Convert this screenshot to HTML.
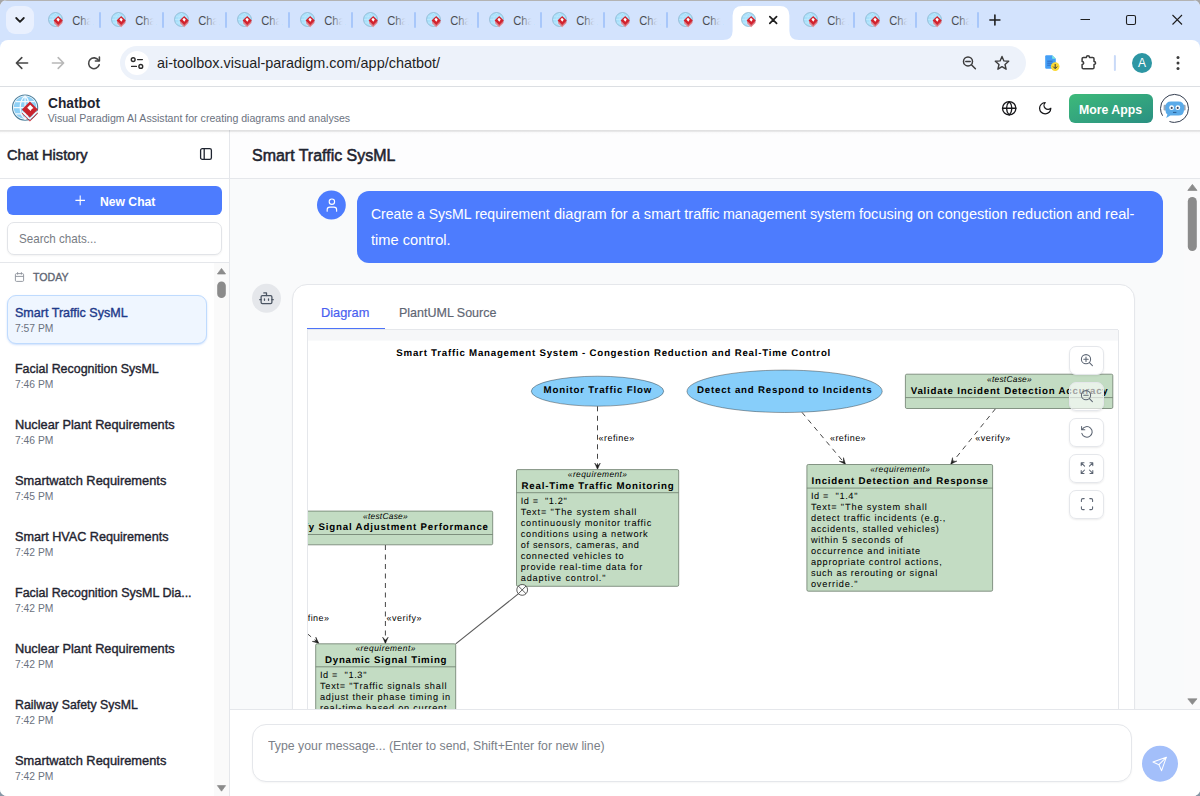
<!DOCTYPE html>
<html><head><meta charset="utf-8"><title>Chatbot</title>
<style>
*{box-sizing:border-box;margin:0;padding:0}
html,body{width:1200px;height:796px;overflow:hidden;background:linear-gradient(#a6a6a6 0,#a6a6a6 50%,#8797a6 50%,#8797a6 100%);font-family:"Liberation Sans",sans-serif;color:#1f2430}
.abs{position:absolute}

#tabbar{position:absolute;left:0;top:0;width:1200px;height:52px;background:#d3e3fd}
#toolbar{position:absolute;left:0;top:40px;width:1200px;height:46px;background:#fff;border-radius:8px 8px 0 0}
#tbline{position:absolute;left:0;top:86px;width:1200px;height:1px;background:#dcdfe3}
#omni{position:absolute;left:120px;top:46px;width:906px;height:34px;border-radius:17px;background:#edf2fa}
.tt{font-family:"Liberation Sans",sans-serif}

.dg text{font-family:"Liberation Sans",sans-serif;fill:#000}
.dg text{text-rendering:geometricPrecision}.dg .h{font-size:9.7px;font-weight:bold}.dg .b{font-size:9.2px;stroke:#000;stroke-width:0.04px}.dg .l{font-size:9px}.dg .s{font-size:8.4px;font-style:italic}
.tx{position:absolute;white-space:pre;line-height:1;transform-origin:0 50%}
#apphead{position:absolute;left:0;top:87px;width:1200px;height:43px;background:#fff}
#hshadow{position:absolute;left:0;top:130px;width:1200px;height:4px;background:linear-gradient(rgba(0,0,0,.12),rgba(0,0,0,.09) 35%,rgba(0,0,0,.02) 60%,rgba(0,0,0,0))}
#side{position:absolute;left:0;top:130px;width:230px;height:666px;background:#fff;border-right:1px solid #e5e7eb}
#main{position:absolute;left:230px;top:130px;width:970px;height:666px;background:#f9fafb}
#newchat{left:7px;top:186px;width:215px;height:29px;border-radius:6px;background:#4d7cfe}
#search{left:7px;top:222px;width:215px;height:33px;border:1px solid #e2e4e8;border-radius:7px;background:#fff;box-shadow:0 1px 2px rgba(0,0,0,.05)}
#selbox{left:7px;top:295px;width:200px;height:49px;border-radius:9px;background:#eff6ff;border:1px solid #bfdbfe;box-shadow:0 1px 2px rgba(59,130,246,.25)}
#mhead{left:230px;top:130px;width:970px;height:49px;background:#fdfdfe;border-bottom:1px solid #e5e7eb}
#ububble{left:357px;top:191px;width:806px;height:72px;border-radius:12px;background:#4d7cfe}
#botcard{left:292.4px;top:284px;width:842.6px;height:450px;border-radius:15px;background:#fff;border:1px solid #e5e7eb;box-shadow:0 1px 2px rgba(0,0,0,.04)}
#panel{left:307px;top:330px;width:812px;height:400px;border:1px solid #e5e7eb;border-top:none;background:#fff;overflow:hidden}
#inputbar{left:230px;top:709px;width:970px;height:87px;background:#fff;border-top:1px solid #e5e7eb}
#inputbox{left:252px;top:724px;width:880px;height:58px;border-radius:14px;border:1px solid #e5e7eb;background:#fff;box-shadow:0 1px 2px rgba(0,0,0,.04)}
.zb{position:absolute;left:761.2px;width:34.7px;height:28.7px;border:1px solid #e5e7eb;border-radius:7px;box-shadow:0 1px 2px rgba(0,0,0,.08)}
.zb svg{position:absolute;left:-0.7px;top:-0.6px}

#win{position:absolute;left:0;top:0;width:1200px;height:796px;border-radius:7px;overflow:hidden;background:#fff}
#topline{position:absolute;left:0;top:0;width:1200px;height:1px;background:#b3b3b3}
</style></head><body>
<div id="win">
<div id="tabbar"></div><div id="toolbar"></div><div id="tbline"></div><div id="omni"></div>
<svg width="1200" height="90" class="abs" style="left:0;top:0">
<defs><linearGradient id="fd" x1="0" x2="1"><stop offset="0" stop-color="#d3e3fd" stop-opacity="0"/><stop offset="0.25" stop-color="#d3e3fd" stop-opacity="0.3"/><stop offset="0.7" stop-color="#d3e3fd" stop-opacity="0.92"/><stop offset="0.85" stop-color="#d3e3fd" stop-opacity="1"/></linearGradient></defs>
<rect x="6" y="6" width="28" height="28" rx="9" fill="#e9f0fe"/>
<path d="M16.2 18 L20 21.8 L23.8 18" stroke="#1f1f1f" stroke-width="1.8" fill="none" stroke-linecap="round" stroke-linejoin="round"/>
<g transform="translate(55.5,19.5) scale(0.553) translate(-25.1,-107.6)"><circle cx="25.1" cy="107.6" r="12.6" fill="#a9e0fb" stroke="#86b1c9" stroke-width="1.3"/><path d="M25.1 96 C18.6 101 18.6 114.2 25.1 119.2 M25.1 96 C30.6 101 30.6 114.2 25.1 119.2 M13.6 107.6 H36.6 M15.4 101.6 H34.8 M15.4 113.8 H34.8" stroke="#c6ebfd" stroke-width="1.2" fill="none"/><path d="M29.9 101.6 L37.9 109.5 L29.9 117.4 L21.9 109.5 Z" fill="#d3222d"/><path d="M22.4 112.4 L29.9 119.8 L37.6 112.2 L37.6 114 L29.9 121.6 L22.4 114.2 Z" fill="#f08a8c"/><path d="M22.4 110.6 L29.9 118 L37.6 110.4 L37.6 112 L29.9 119.6 L22.4 112.2 Z" fill="#e9585f"/><path d="M29.9 101.6 L37.9 109.5 L29.9 117.4 L21.9 109.5 Z" fill="#d3222d"/><path d="M29.6 104.4 L32.8 107.6 L30.2 111.6 L26.8 107.4 Z" fill="#fff"/></g><text x="72.2" y="24.8" font-size="12.2" fill="#4a4d52" class="tt" textLength="20.6" lengthAdjust="spacingAndGlyphs">Cha</text><rect x="79" y="10" width="14" height="20" fill="url(#fd)"/>
<g transform="translate(118.5,19.5) scale(0.553) translate(-25.1,-107.6)"><circle cx="25.1" cy="107.6" r="12.6" fill="#a9e0fb" stroke="#86b1c9" stroke-width="1.3"/><path d="M25.1 96 C18.6 101 18.6 114.2 25.1 119.2 M25.1 96 C30.6 101 30.6 114.2 25.1 119.2 M13.6 107.6 H36.6 M15.4 101.6 H34.8 M15.4 113.8 H34.8" stroke="#c6ebfd" stroke-width="1.2" fill="none"/><path d="M29.9 101.6 L37.9 109.5 L29.9 117.4 L21.9 109.5 Z" fill="#d3222d"/><path d="M22.4 112.4 L29.9 119.8 L37.6 112.2 L37.6 114 L29.9 121.6 L22.4 114.2 Z" fill="#f08a8c"/><path d="M22.4 110.6 L29.9 118 L37.6 110.4 L37.6 112 L29.9 119.6 L22.4 112.2 Z" fill="#e9585f"/><path d="M29.9 101.6 L37.9 109.5 L29.9 117.4 L21.9 109.5 Z" fill="#d3222d"/><path d="M29.6 104.4 L32.8 107.6 L30.2 111.6 L26.8 107.4 Z" fill="#fff"/></g><text x="135.2" y="24.8" font-size="12.2" fill="#4a4d52" class="tt" textLength="20.6" lengthAdjust="spacingAndGlyphs">Cha</text><rect x="142" y="10" width="14" height="20" fill="url(#fd)"/>
<g transform="translate(181.5,19.5) scale(0.553) translate(-25.1,-107.6)"><circle cx="25.1" cy="107.6" r="12.6" fill="#a9e0fb" stroke="#86b1c9" stroke-width="1.3"/><path d="M25.1 96 C18.6 101 18.6 114.2 25.1 119.2 M25.1 96 C30.6 101 30.6 114.2 25.1 119.2 M13.6 107.6 H36.6 M15.4 101.6 H34.8 M15.4 113.8 H34.8" stroke="#c6ebfd" stroke-width="1.2" fill="none"/><path d="M29.9 101.6 L37.9 109.5 L29.9 117.4 L21.9 109.5 Z" fill="#d3222d"/><path d="M22.4 112.4 L29.9 119.8 L37.6 112.2 L37.6 114 L29.9 121.6 L22.4 114.2 Z" fill="#f08a8c"/><path d="M22.4 110.6 L29.9 118 L37.6 110.4 L37.6 112 L29.9 119.6 L22.4 112.2 Z" fill="#e9585f"/><path d="M29.9 101.6 L37.9 109.5 L29.9 117.4 L21.9 109.5 Z" fill="#d3222d"/><path d="M29.6 104.4 L32.8 107.6 L30.2 111.6 L26.8 107.4 Z" fill="#fff"/></g><text x="198.2" y="24.8" font-size="12.2" fill="#4a4d52" class="tt" textLength="20.6" lengthAdjust="spacingAndGlyphs">Cha</text><rect x="205" y="10" width="14" height="20" fill="url(#fd)"/>
<g transform="translate(244.5,19.5) scale(0.553) translate(-25.1,-107.6)"><circle cx="25.1" cy="107.6" r="12.6" fill="#a9e0fb" stroke="#86b1c9" stroke-width="1.3"/><path d="M25.1 96 C18.6 101 18.6 114.2 25.1 119.2 M25.1 96 C30.6 101 30.6 114.2 25.1 119.2 M13.6 107.6 H36.6 M15.4 101.6 H34.8 M15.4 113.8 H34.8" stroke="#c6ebfd" stroke-width="1.2" fill="none"/><path d="M29.9 101.6 L37.9 109.5 L29.9 117.4 L21.9 109.5 Z" fill="#d3222d"/><path d="M22.4 112.4 L29.9 119.8 L37.6 112.2 L37.6 114 L29.9 121.6 L22.4 114.2 Z" fill="#f08a8c"/><path d="M22.4 110.6 L29.9 118 L37.6 110.4 L37.6 112 L29.9 119.6 L22.4 112.2 Z" fill="#e9585f"/><path d="M29.9 101.6 L37.9 109.5 L29.9 117.4 L21.9 109.5 Z" fill="#d3222d"/><path d="M29.6 104.4 L32.8 107.6 L30.2 111.6 L26.8 107.4 Z" fill="#fff"/></g><text x="261.2" y="24.8" font-size="12.2" fill="#4a4d52" class="tt" textLength="20.6" lengthAdjust="spacingAndGlyphs">Cha</text><rect x="268" y="10" width="14" height="20" fill="url(#fd)"/>
<g transform="translate(307.5,19.5) scale(0.553) translate(-25.1,-107.6)"><circle cx="25.1" cy="107.6" r="12.6" fill="#a9e0fb" stroke="#86b1c9" stroke-width="1.3"/><path d="M25.1 96 C18.6 101 18.6 114.2 25.1 119.2 M25.1 96 C30.6 101 30.6 114.2 25.1 119.2 M13.6 107.6 H36.6 M15.4 101.6 H34.8 M15.4 113.8 H34.8" stroke="#c6ebfd" stroke-width="1.2" fill="none"/><path d="M29.9 101.6 L37.9 109.5 L29.9 117.4 L21.9 109.5 Z" fill="#d3222d"/><path d="M22.4 112.4 L29.9 119.8 L37.6 112.2 L37.6 114 L29.9 121.6 L22.4 114.2 Z" fill="#f08a8c"/><path d="M22.4 110.6 L29.9 118 L37.6 110.4 L37.6 112 L29.9 119.6 L22.4 112.2 Z" fill="#e9585f"/><path d="M29.9 101.6 L37.9 109.5 L29.9 117.4 L21.9 109.5 Z" fill="#d3222d"/><path d="M29.6 104.4 L32.8 107.6 L30.2 111.6 L26.8 107.4 Z" fill="#fff"/></g><text x="324.2" y="24.8" font-size="12.2" fill="#4a4d52" class="tt" textLength="20.6" lengthAdjust="spacingAndGlyphs">Cha</text><rect x="331" y="10" width="14" height="20" fill="url(#fd)"/>
<g transform="translate(370.5,19.5) scale(0.553) translate(-25.1,-107.6)"><circle cx="25.1" cy="107.6" r="12.6" fill="#a9e0fb" stroke="#86b1c9" stroke-width="1.3"/><path d="M25.1 96 C18.6 101 18.6 114.2 25.1 119.2 M25.1 96 C30.6 101 30.6 114.2 25.1 119.2 M13.6 107.6 H36.6 M15.4 101.6 H34.8 M15.4 113.8 H34.8" stroke="#c6ebfd" stroke-width="1.2" fill="none"/><path d="M29.9 101.6 L37.9 109.5 L29.9 117.4 L21.9 109.5 Z" fill="#d3222d"/><path d="M22.4 112.4 L29.9 119.8 L37.6 112.2 L37.6 114 L29.9 121.6 L22.4 114.2 Z" fill="#f08a8c"/><path d="M22.4 110.6 L29.9 118 L37.6 110.4 L37.6 112 L29.9 119.6 L22.4 112.2 Z" fill="#e9585f"/><path d="M29.9 101.6 L37.9 109.5 L29.9 117.4 L21.9 109.5 Z" fill="#d3222d"/><path d="M29.6 104.4 L32.8 107.6 L30.2 111.6 L26.8 107.4 Z" fill="#fff"/></g><text x="387.2" y="24.8" font-size="12.2" fill="#4a4d52" class="tt" textLength="20.6" lengthAdjust="spacingAndGlyphs">Cha</text><rect x="394" y="10" width="14" height="20" fill="url(#fd)"/>
<g transform="translate(433.5,19.5) scale(0.553) translate(-25.1,-107.6)"><circle cx="25.1" cy="107.6" r="12.6" fill="#a9e0fb" stroke="#86b1c9" stroke-width="1.3"/><path d="M25.1 96 C18.6 101 18.6 114.2 25.1 119.2 M25.1 96 C30.6 101 30.6 114.2 25.1 119.2 M13.6 107.6 H36.6 M15.4 101.6 H34.8 M15.4 113.8 H34.8" stroke="#c6ebfd" stroke-width="1.2" fill="none"/><path d="M29.9 101.6 L37.9 109.5 L29.9 117.4 L21.9 109.5 Z" fill="#d3222d"/><path d="M22.4 112.4 L29.9 119.8 L37.6 112.2 L37.6 114 L29.9 121.6 L22.4 114.2 Z" fill="#f08a8c"/><path d="M22.4 110.6 L29.9 118 L37.6 110.4 L37.6 112 L29.9 119.6 L22.4 112.2 Z" fill="#e9585f"/><path d="M29.9 101.6 L37.9 109.5 L29.9 117.4 L21.9 109.5 Z" fill="#d3222d"/><path d="M29.6 104.4 L32.8 107.6 L30.2 111.6 L26.8 107.4 Z" fill="#fff"/></g><text x="450.2" y="24.8" font-size="12.2" fill="#4a4d52" class="tt" textLength="20.6" lengthAdjust="spacingAndGlyphs">Cha</text><rect x="457" y="10" width="14" height="20" fill="url(#fd)"/>
<g transform="translate(496.5,19.5) scale(0.553) translate(-25.1,-107.6)"><circle cx="25.1" cy="107.6" r="12.6" fill="#a9e0fb" stroke="#86b1c9" stroke-width="1.3"/><path d="M25.1 96 C18.6 101 18.6 114.2 25.1 119.2 M25.1 96 C30.6 101 30.6 114.2 25.1 119.2 M13.6 107.6 H36.6 M15.4 101.6 H34.8 M15.4 113.8 H34.8" stroke="#c6ebfd" stroke-width="1.2" fill="none"/><path d="M29.9 101.6 L37.9 109.5 L29.9 117.4 L21.9 109.5 Z" fill="#d3222d"/><path d="M22.4 112.4 L29.9 119.8 L37.6 112.2 L37.6 114 L29.9 121.6 L22.4 114.2 Z" fill="#f08a8c"/><path d="M22.4 110.6 L29.9 118 L37.6 110.4 L37.6 112 L29.9 119.6 L22.4 112.2 Z" fill="#e9585f"/><path d="M29.9 101.6 L37.9 109.5 L29.9 117.4 L21.9 109.5 Z" fill="#d3222d"/><path d="M29.6 104.4 L32.8 107.6 L30.2 111.6 L26.8 107.4 Z" fill="#fff"/></g><text x="513.2" y="24.8" font-size="12.2" fill="#4a4d52" class="tt" textLength="20.6" lengthAdjust="spacingAndGlyphs">Cha</text><rect x="520" y="10" width="14" height="20" fill="url(#fd)"/>
<g transform="translate(559.5,19.5) scale(0.553) translate(-25.1,-107.6)"><circle cx="25.1" cy="107.6" r="12.6" fill="#a9e0fb" stroke="#86b1c9" stroke-width="1.3"/><path d="M25.1 96 C18.6 101 18.6 114.2 25.1 119.2 M25.1 96 C30.6 101 30.6 114.2 25.1 119.2 M13.6 107.6 H36.6 M15.4 101.6 H34.8 M15.4 113.8 H34.8" stroke="#c6ebfd" stroke-width="1.2" fill="none"/><path d="M29.9 101.6 L37.9 109.5 L29.9 117.4 L21.9 109.5 Z" fill="#d3222d"/><path d="M22.4 112.4 L29.9 119.8 L37.6 112.2 L37.6 114 L29.9 121.6 L22.4 114.2 Z" fill="#f08a8c"/><path d="M22.4 110.6 L29.9 118 L37.6 110.4 L37.6 112 L29.9 119.6 L22.4 112.2 Z" fill="#e9585f"/><path d="M29.9 101.6 L37.9 109.5 L29.9 117.4 L21.9 109.5 Z" fill="#d3222d"/><path d="M29.6 104.4 L32.8 107.6 L30.2 111.6 L26.8 107.4 Z" fill="#fff"/></g><text x="576.2" y="24.8" font-size="12.2" fill="#4a4d52" class="tt" textLength="20.6" lengthAdjust="spacingAndGlyphs">Cha</text><rect x="583" y="10" width="14" height="20" fill="url(#fd)"/>
<g transform="translate(622.5,19.5) scale(0.553) translate(-25.1,-107.6)"><circle cx="25.1" cy="107.6" r="12.6" fill="#a9e0fb" stroke="#86b1c9" stroke-width="1.3"/><path d="M25.1 96 C18.6 101 18.6 114.2 25.1 119.2 M25.1 96 C30.6 101 30.6 114.2 25.1 119.2 M13.6 107.6 H36.6 M15.4 101.6 H34.8 M15.4 113.8 H34.8" stroke="#c6ebfd" stroke-width="1.2" fill="none"/><path d="M29.9 101.6 L37.9 109.5 L29.9 117.4 L21.9 109.5 Z" fill="#d3222d"/><path d="M22.4 112.4 L29.9 119.8 L37.6 112.2 L37.6 114 L29.9 121.6 L22.4 114.2 Z" fill="#f08a8c"/><path d="M22.4 110.6 L29.9 118 L37.6 110.4 L37.6 112 L29.9 119.6 L22.4 112.2 Z" fill="#e9585f"/><path d="M29.9 101.6 L37.9 109.5 L29.9 117.4 L21.9 109.5 Z" fill="#d3222d"/><path d="M29.6 104.4 L32.8 107.6 L30.2 111.6 L26.8 107.4 Z" fill="#fff"/></g><text x="639.2" y="24.8" font-size="12.2" fill="#4a4d52" class="tt" textLength="20.6" lengthAdjust="spacingAndGlyphs">Cha</text><rect x="646" y="10" width="14" height="20" fill="url(#fd)"/>
<g transform="translate(685.5,19.5) scale(0.553) translate(-25.1,-107.6)"><circle cx="25.1" cy="107.6" r="12.6" fill="#a9e0fb" stroke="#86b1c9" stroke-width="1.3"/><path d="M25.1 96 C18.6 101 18.6 114.2 25.1 119.2 M25.1 96 C30.6 101 30.6 114.2 25.1 119.2 M13.6 107.6 H36.6 M15.4 101.6 H34.8 M15.4 113.8 H34.8" stroke="#c6ebfd" stroke-width="1.2" fill="none"/><path d="M29.9 101.6 L37.9 109.5 L29.9 117.4 L21.9 109.5 Z" fill="#d3222d"/><path d="M22.4 112.4 L29.9 119.8 L37.6 112.2 L37.6 114 L29.9 121.6 L22.4 114.2 Z" fill="#f08a8c"/><path d="M22.4 110.6 L29.9 118 L37.6 110.4 L37.6 112 L29.9 119.6 L22.4 112.2 Z" fill="#e9585f"/><path d="M29.9 101.6 L37.9 109.5 L29.9 117.4 L21.9 109.5 Z" fill="#d3222d"/><path d="M29.6 104.4 L32.8 107.6 L30.2 111.6 L26.8 107.4 Z" fill="#fff"/></g><text x="702.2" y="24.8" font-size="12.2" fill="#4a4d52" class="tt" textLength="20.6" lengthAdjust="spacingAndGlyphs">Cha</text><rect x="709" y="10" width="14" height="20" fill="url(#fd)"/>
<g transform="translate(810.5,19.5) scale(0.553) translate(-25.1,-107.6)"><circle cx="25.1" cy="107.6" r="12.6" fill="#a9e0fb" stroke="#86b1c9" stroke-width="1.3"/><path d="M25.1 96 C18.6 101 18.6 114.2 25.1 119.2 M25.1 96 C30.6 101 30.6 114.2 25.1 119.2 M13.6 107.6 H36.6 M15.4 101.6 H34.8 M15.4 113.8 H34.8" stroke="#c6ebfd" stroke-width="1.2" fill="none"/><path d="M29.9 101.6 L37.9 109.5 L29.9 117.4 L21.9 109.5 Z" fill="#d3222d"/><path d="M22.4 112.4 L29.9 119.8 L37.6 112.2 L37.6 114 L29.9 121.6 L22.4 114.2 Z" fill="#f08a8c"/><path d="M22.4 110.6 L29.9 118 L37.6 110.4 L37.6 112 L29.9 119.6 L22.4 112.2 Z" fill="#e9585f"/><path d="M29.9 101.6 L37.9 109.5 L29.9 117.4 L21.9 109.5 Z" fill="#d3222d"/><path d="M29.6 104.4 L32.8 107.6 L30.2 111.6 L26.8 107.4 Z" fill="#fff"/></g><text x="827.2" y="24.8" font-size="12.2" fill="#4a4d52" class="tt" textLength="20.6" lengthAdjust="spacingAndGlyphs">Cha</text><rect x="834" y="10" width="14" height="20" fill="url(#fd)"/>
<g transform="translate(872.5,19.5) scale(0.553) translate(-25.1,-107.6)"><circle cx="25.1" cy="107.6" r="12.6" fill="#a9e0fb" stroke="#86b1c9" stroke-width="1.3"/><path d="M25.1 96 C18.6 101 18.6 114.2 25.1 119.2 M25.1 96 C30.6 101 30.6 114.2 25.1 119.2 M13.6 107.6 H36.6 M15.4 101.6 H34.8 M15.4 113.8 H34.8" stroke="#c6ebfd" stroke-width="1.2" fill="none"/><path d="M29.9 101.6 L37.9 109.5 L29.9 117.4 L21.9 109.5 Z" fill="#d3222d"/><path d="M22.4 112.4 L29.9 119.8 L37.6 112.2 L37.6 114 L29.9 121.6 L22.4 114.2 Z" fill="#f08a8c"/><path d="M22.4 110.6 L29.9 118 L37.6 110.4 L37.6 112 L29.9 119.6 L22.4 112.2 Z" fill="#e9585f"/><path d="M29.9 101.6 L37.9 109.5 L29.9 117.4 L21.9 109.5 Z" fill="#d3222d"/><path d="M29.6 104.4 L32.8 107.6 L30.2 111.6 L26.8 107.4 Z" fill="#fff"/></g><text x="889.2" y="24.8" font-size="12.2" fill="#4a4d52" class="tt" textLength="20.6" lengthAdjust="spacingAndGlyphs">Cha</text><rect x="896" y="10" width="14" height="20" fill="url(#fd)"/>
<g transform="translate(934.5,19.5) scale(0.553) translate(-25.1,-107.6)"><circle cx="25.1" cy="107.6" r="12.6" fill="#a9e0fb" stroke="#86b1c9" stroke-width="1.3"/><path d="M25.1 96 C18.6 101 18.6 114.2 25.1 119.2 M25.1 96 C30.6 101 30.6 114.2 25.1 119.2 M13.6 107.6 H36.6 M15.4 101.6 H34.8 M15.4 113.8 H34.8" stroke="#c6ebfd" stroke-width="1.2" fill="none"/><path d="M29.9 101.6 L37.9 109.5 L29.9 117.4 L21.9 109.5 Z" fill="#d3222d"/><path d="M22.4 112.4 L29.9 119.8 L37.6 112.2 L37.6 114 L29.9 121.6 L22.4 114.2 Z" fill="#f08a8c"/><path d="M22.4 110.6 L29.9 118 L37.6 110.4 L37.6 112 L29.9 119.6 L22.4 112.2 Z" fill="#e9585f"/><path d="M29.9 101.6 L37.9 109.5 L29.9 117.4 L21.9 109.5 Z" fill="#d3222d"/><path d="M29.6 104.4 L32.8 107.6 L30.2 111.6 L26.8 107.4 Z" fill="#fff"/></g><text x="951.2" y="24.8" font-size="12.2" fill="#4a4d52" class="tt" textLength="20.6" lengthAdjust="spacingAndGlyphs">Cha</text><rect x="958" y="10" width="14" height="20" fill="url(#fd)"/>
<rect x="99" y="12" width="2" height="16" rx="1" fill="#a8c7fa"/>
<rect x="162" y="12" width="2" height="16" rx="1" fill="#a8c7fa"/>
<rect x="225" y="12" width="2" height="16" rx="1" fill="#a8c7fa"/>
<rect x="288" y="12" width="2" height="16" rx="1" fill="#a8c7fa"/>
<rect x="351" y="12" width="2" height="16" rx="1" fill="#a8c7fa"/>
<rect x="414" y="12" width="2" height="16" rx="1" fill="#a8c7fa"/>
<rect x="477" y="12" width="2" height="16" rx="1" fill="#a8c7fa"/>
<rect x="540" y="12" width="2" height="16" rx="1" fill="#a8c7fa"/>
<rect x="603" y="12" width="2" height="16" rx="1" fill="#a8c7fa"/>
<rect x="666" y="12" width="2" height="16" rx="1" fill="#a8c7fa"/>
<rect x="853" y="12" width="2" height="16" rx="1" fill="#a8c7fa"/>
<rect x="915" y="12" width="2" height="16" rx="1" fill="#a8c7fa"/>
<rect x="977" y="12" width="2" height="16" rx="1" fill="#a8c7fa"/>
<path d="M723 40 Q732.6 40 732.6 31 L732.6 15.6 Q732.6 6 742.2 6 L779.8 6 Q789.4 6 789.4 15.6 L789.4 31 Q789.4 40 799 40 Z" fill="#fff"/>
<g transform="translate(748.5,19.5) scale(0.553) translate(-25.1,-107.6)"><circle cx="25.1" cy="107.6" r="12.6" fill="#a9e0fb" stroke="#86b1c9" stroke-width="1.3"/><path d="M25.1 96 C18.6 101 18.6 114.2 25.1 119.2 M25.1 96 C30.6 101 30.6 114.2 25.1 119.2 M13.6 107.6 H36.6 M15.4 101.6 H34.8 M15.4 113.8 H34.8" stroke="#c6ebfd" stroke-width="1.2" fill="none"/><path d="M29.9 101.6 L37.9 109.5 L29.9 117.4 L21.9 109.5 Z" fill="#d3222d"/><path d="M22.4 112.4 L29.9 119.8 L37.6 112.2 L37.6 114 L29.9 121.6 L22.4 114.2 Z" fill="#f08a8c"/><path d="M22.4 110.6 L29.9 118 L37.6 110.4 L37.6 112 L29.9 119.6 L22.4 112.2 Z" fill="#e9585f"/><path d="M29.9 101.6 L37.9 109.5 L29.9 117.4 L21.9 109.5 Z" fill="#d3222d"/><path d="M29.6 104.4 L32.8 107.6 L30.2 111.6 L26.8 107.4 Z" fill="#fff"/></g>
<path d="M769.8 16.6 L776.6 23.4 M776.6 16.6 L769.8 23.4" stroke="#1f1f1f" stroke-width="1.7" stroke-linecap="round"/>
<path d="M989.9 20 H999.9 M994.9 15 V25" stroke="#1f1f1f" stroke-width="1.6" stroke-linecap="round"/>
<path d="M1080.5 19.5 H1090" stroke="#1f1f1f" stroke-width="1.1"/>
<rect x="1126.5" y="15.5" width="9" height="9" rx="1.6" fill="none" stroke="#1f1f1f" stroke-width="1.1"/>
<path d="M1172.5 15 L1182 24.5 M1182 15 L1172.5 24.5" stroke="#1f1f1f" stroke-width="1.1"/>
<!-- toolbar icons (y center 63) -->
<g fill="none" stroke-linecap="round" stroke-linejoin="round">
<path d="M27.6 63 H17 M21.8 57.6 L16.4 63 L21.8 68.4" stroke="#474747" stroke-width="1.6"/>
<path d="M52.4 63 H63 M58.2 57.6 L63.6 63 L58.2 68.4" stroke="#b8b8b8" stroke-width="1.6"/>
<path d="M98.6 60.4 A5.4 5.4 0 1 0 99.2 64.8" stroke="#474747" stroke-width="1.6"/>
<path d="M99.4 57 V61 H95.4" stroke="#474747" stroke-width="1.6"/>
</g>
<circle cx="137" cy="63" r="12" fill="#fff"/>
<g fill="none" stroke="#2b2b2b" stroke-width="1.4" stroke-linecap="round">
<circle cx="133.2" cy="59.6" r="1.9"/><path d="M137.6 59.6 H142.4 M131.6 66.4 H136.4"/><circle cx="140.8" cy="66.4" r="1.9"/>
<!-- zoom-out + star -->
<circle cx="968" cy="61.4" r="4.5" stroke="#3c3c3c" stroke-width="1.5"/><path d="M971.4 64.8 L975.4 68.8 M965.8 61.4 H970.2" stroke="#3c3c3c" stroke-width="1.5"/>
<path d="M1002 56.4 L1003.9 60.9 L1008.7 61.3 L1005 64.5 L1006.1 69.2 L1002 66.7 L997.9 69.2 L999 64.5 L995.3 61.3 L1000.1 60.9 Z" stroke="#3c3c3c" stroke-width="1.4" stroke-linejoin="round"/>
<!-- puzzle -->
<path d="M1083.4 57.4 H1086.4 A1.55 1.55 0 0 1 1089.5 57.4 H1092.7 Q1094 57.4 1094 58.7 V61.4 A1.55 1.55 0 0 1 1094 64.5 V67.5 Q1094 68.8 1092.7 68.8 H1083.4 Q1082.1 68.8 1082.1 67.5 V64.5 A1.55 1.55 0 0 0 1082.1 61.4 V58.7 Q1082.1 57.4 1083.4 57.4 Z" stroke="#3c3c3c" stroke-width="1.5" stroke-linejoin="round"/>
</g>
<!-- doc/download ext -->
<path d="M1046.4 55.2 H1052.2 L1055.8 58.8 V68.8 H1046.4 Q1045.2 68.8 1045.2 67.6 V56.4 Q1045.2 55.2 1046.4 55.2 Z" fill="#449ff6"/><path d="M1052.2 55.2 L1055.8 58.8 H1052.2 Z" fill="#7fe9dc"/>
<path d="M1047.2 61.2 H1052.6 M1047.2 63.2 H1052.6 M1047.2 65.2 H1050.6" stroke="#2c66bd" stroke-width="0.9"/>
<circle cx="1055.2" cy="66.6" r="4.3" fill="#fbd936"/><path d="M1055.2 64 V68.4 M1053.2 66.6 L1055.2 68.6 L1057.2 66.6" stroke="#3a3a3a" stroke-width="1" fill="none"/>
<rect x="1113.9" y="55" width="2" height="16" rx="1" fill="#c9daf8"/>
<circle cx="1142" cy="63" r="10" fill="#2d96a3"/>
<text x="1142" y="67.4" text-anchor="middle" font-size="12" fill="#fff" class="tt">A</text>
<circle cx="1178" cy="57.6" r="1.5" fill="#3c3c3c"/><circle cx="1178" cy="63" r="1.5" fill="#3c3c3c"/><circle cx="1178" cy="68.4" r="1.5" fill="#3c3c3c"/>
</svg><div class="tx" style="left:157px;top:56.11px;font-size:14.4px;color:#1f1f1f;transform:scaleX(1.0022);">ai-toolbox.visual-paradigm.com/app/chatbot/</div><div id="side"></div>
<div class="tx" style="left:6.8px;top:147.65px;font-size:14.3px;color:#1f2430;-webkit-text-stroke:0.5px #1f2430;transform:scaleX(1.0247);">Chat History</div>
<svg class="abs" style="left:198px;top:146px" width="16" height="16"><rect x="2.6" y="2.6" width="10.8" height="10.8" rx="1.7" fill="none" stroke="#1f2430" stroke-width="1.3"/><path d="M6.2 2.6 V13.4" stroke="#1f2430" stroke-width="1.3"/></svg>
<div class="abs" style="left:0;top:178px;width:229px;height:1px;background:#e5e7eb"></div>
<div class="abs" id="newchat"></div>
<svg class="abs" style="left:74px;top:194px" width="14" height="14"><path d="M6.2 1.6 V11.2 M1.4 6.4 H11" stroke="#fff" stroke-width="1.1"/></svg>
<div class="tx" style="left:100.2px;top:194.91px;font-size:13.1px;color:#fff;font-weight:bold;transform:scaleX(0.9284);">New Chat</div>
<div class="abs" id="search"></div>
<div class="tx" style="left:18.7px;top:233.46px;font-size:12.8px;color:#787c84;transform:scaleX(0.9068);">Search chats...</div>
<div class="abs" style="left:0;top:262px;width:229px;height:1px;background:#e5e7eb"></div>
<div class="abs" style="left:214px;top:263px;width:15px;height:533px;background:#fafafa"></div>
<svg class="abs" style="left:214px;top:263px" width="15" height="533">
<path d="M3.4 11 L7.5 5.4 L11.6 11 Z" fill="#8b8b8b" stroke="#8b8b8b" stroke-width="0.7" stroke-linejoin="round"/>
<rect x="3.2" y="18.5" width="8.6" height="16.5" rx="4.3" fill="#8b8b8b"/>
<path d="M3.4 522.6 L7.5 528.2 L11.6 522.6 Z" fill="#8b8b8b" stroke="#8b8b8b" stroke-width="0.7" stroke-linejoin="round"/>
</svg>
<svg class="abs" style="left:13px;top:270px" width="14" height="14"><rect x="2.4" y="3.6" width="8.2" height="7.8" rx="1.1" fill="none" stroke="#8a8f99" stroke-width="0.9"/><path d="M2.4 6.4 H10.6 M4.6 2.2 V4.6 M8.4 2.2 V4.6" stroke="#8a8f99" stroke-width="0.9"/></svg>
<div class="tx" style="left:33px;top:271.92px;font-size:11.2px;color:#5f6673;-webkit-text-stroke:0.35px #5f6673;transform:scaleX(0.9516);">TODAY</div>
<div class="abs" id="selbox"></div>
<div class="tx" style="left:15.2px;top:305.57px;font-size:13.5px;color:#1e3a8a;-webkit-text-stroke:0.4px #1e3a8a;transform:scaleX(0.9292);">Smart Traffic SysML</div>
<div class="tx" style="left:15.3px;top:322.79px;font-size:11px;color:#6b7280;transform:scaleX(0.9373);">7:57 PM</div>
<div class="tx" style="left:15.2px;top:361.57px;font-size:13.5px;color:#1f2430;-webkit-text-stroke:0.4px #1f2430;transform:scaleX(0.9213);">Facial Recognition SysML</div>
<div class="tx" style="left:15.3px;top:378.79px;font-size:11px;color:#6b7280;transform:scaleX(0.9373);">7:46 PM</div>
<div class="tx" style="left:15.2px;top:417.57px;font-size:13.5px;color:#1f2430;-webkit-text-stroke:0.4px #1f2430;transform:scaleX(0.9453);">Nuclear Plant Requirements</div>
<div class="tx" style="left:15.3px;top:434.79px;font-size:11px;color:#6b7280;transform:scaleX(0.9373);">7:46 PM</div>
<div class="tx" style="left:15.2px;top:473.57px;font-size:13.5px;color:#1f2430;-webkit-text-stroke:0.4px #1f2430;transform:scaleX(0.9512);">Smartwatch Requirements</div>
<div class="tx" style="left:15.3px;top:490.79px;font-size:11px;color:#6b7280;transform:scaleX(0.9373);">7:45 PM</div>
<div class="tx" style="left:15.2px;top:529.57px;font-size:13.5px;color:#1f2430;-webkit-text-stroke:0.4px #1f2430;transform:scaleX(0.9356);">Smart HVAC Requirements</div>
<div class="tx" style="left:15.3px;top:546.79px;font-size:11px;color:#6b7280;transform:scaleX(0.9373);">7:42 PM</div>
<div class="tx" style="left:15.2px;top:585.57px;font-size:13.5px;color:#1f2430;-webkit-text-stroke:0.4px #1f2430;transform:scaleX(0.9254);">Facial Recognition SysML Dia...</div>
<div class="tx" style="left:15.3px;top:602.79px;font-size:11px;color:#6b7280;transform:scaleX(0.9373);">7:42 PM</div>
<div class="tx" style="left:15.2px;top:641.57px;font-size:13.5px;color:#1f2430;-webkit-text-stroke:0.4px #1f2430;transform:scaleX(0.9453);">Nuclear Plant Requirements</div>
<div class="tx" style="left:15.3px;top:658.79px;font-size:11px;color:#6b7280;transform:scaleX(0.9373);">7:42 PM</div>
<div class="tx" style="left:15.2px;top:697.57px;font-size:13.5px;color:#1f2430;-webkit-text-stroke:0.4px #1f2430;transform:scaleX(0.9144);">Railway Safety SysML</div>
<div class="tx" style="left:15.3px;top:714.79px;font-size:11px;color:#6b7280;transform:scaleX(0.9373);">7:42 PM</div>
<div class="tx" style="left:15.2px;top:753.57px;font-size:13.5px;color:#1f2430;-webkit-text-stroke:0.4px #1f2430;transform:scaleX(0.9512);">Smartwatch Requirements</div>
<div class="tx" style="left:15.3px;top:770.79px;font-size:11px;color:#6b7280;transform:scaleX(0.9373);">7:42 PM</div><div id="main"></div>
<div class="abs" id="mhead"></div>
<div class="tx" style="left:251.5px;top:147.10px;font-size:16.3px;color:#1f2430;-webkit-text-stroke:0.55px #1f2430;transform:scaleX(0.9804);">Smart Traffic SysML</div>
<svg class="abs" style="left:310px;top:185px" width="44" height="40" viewBox="310 185 44 40"><circle cx="331.4" cy="205" r="14.4" fill="#4d7cfe"/><g transform="translate(323.8,197) scale(0.675)" fill="none" stroke="#fff" stroke-width="1.7" stroke-linecap="round" stroke-linejoin="round"><path d="M19 21v-2a4 4 0 0 0-4-4H9a4 4 0 0 0-4 4v2"/><circle cx="12" cy="7" r="4"/></g></svg>
<div class="abs" id="ububble"></div>
<div class="tx" style="left:371.0px;top:206.53px;font-size:14.5px;color:#fff;transform:scaleX(0.9669);">Create a SysML requirement </div><div class="tx" style="left:553.6px;top:206.53px;font-size:14.5px;color:#fff;transform:scaleX(1.0044);">diagram for a smart traffic </div><div class="tx" style="left:723.3px;top:206.53px;font-size:14.5px;color:#fff;transform:scaleX(0.9811);">management system </div><div class="tx" style="left:859.3px;top:206.53px;font-size:14.5px;color:#fff;transform:scaleX(1.0022);">focusing on congestion </div><div class="tx" style="left:1012.0px;top:206.53px;font-size:14.5px;color:#fff;transform:scaleX(1.0131);">reduction and real-</div>
<div class="tx" style="left:371.4px;top:232.63px;font-size:14.5px;color:#fff;transform:scaleX(1.0091);">time control.</div>
<svg class="abs" style="left:246px;top:278px" width="44" height="40" viewBox="246 278 44 40"><circle cx="266.5" cy="298.3" r="14.5" fill="#e5e7eb"/><g transform="translate(258.4,290.2) scale(0.675)" fill="none" stroke="#4b5563" stroke-width="1.9" stroke-linecap="round" stroke-linejoin="round"><path d="M12 8V4H8"/><rect width="16" height="12" x="4" y="8" rx="2"/><path d="M2 14h2M20 14h2M15 13v2M9 13v2"/></g></svg>
<div class="abs" id="botcard"></div>
<div class="tx" style="left:321.2px;top:305.99px;font-size:13.6px;color:#4a5ff0;-webkit-text-stroke:0.2px #4a5ff0;transform:scaleX(0.9401);">Diagram</div>
<div class="tx" style="left:398.6px;top:306.09px;font-size:13.6px;color:#5f6673;-webkit-text-stroke:0.2px #5f6673;transform:scaleX(0.9186);">PlantUML Source</div>
<div class="abs" style="left:307px;top:329px;width:811px;height:1.5px;background:#e5e7eb"></div>
<div class="abs" style="left:307px;top:327.7px;width:78px;height:1.8px;background:#4d73f8"></div>
<div class="abs" id="panel">
<svg class="abs dg" style="left:0;top:0" width="810" height="400" viewBox="308 330 810 400"><rect x="308" y="330" width="810" height="10.6" fill="#f6f7f9"/>
<text x="396.3" y="356.3" class="h" textLength="434" lengthAdjust="spacing">Smart Traffic Management System - Congestion Reduction and Real-Time Control</text>
<ellipse cx="597.5" cy="391.2" rx="66.2" ry="15" fill="#87cefa" stroke="#1e1e1e" stroke-width="0.4"/>
<text x="543.6" y="393.3" class="h" textLength="107.6" lengthAdjust="spacing">Monitor Traffic Flow</text>
<ellipse cx="784.6" cy="391.3" rx="97.6" ry="21.2" fill="#87cefa" stroke="#1e1e1e" stroke-width="0.4"/>
<text x="697" y="393.1" class="h" textLength="174.6" lengthAdjust="spacing">Detect and Respond to Incidents</text>
<path d="M597.5 406.3 L597.5 469.3" stroke="#3c3c3c" stroke-width="0.95" fill="none" stroke-dasharray="5 4.5"/><path d="M597.50 469.30 L594.73 463.09 L597.50 466.10 L600.27 463.09 Z" fill="#1a1a1a" stroke="#1a1a1a" stroke-width="0.5"/>
<text x="598.6" y="441" class="l" textLength="35.6" lengthAdjust="spacing">«refine»</text>
<path d="M802 412.4 L845.4 464.2" stroke="#3c3c3c" stroke-width="0.95" fill="none" stroke-dasharray="5 4.5"/><path d="M845.40 464.20 L839.29 461.22 L843.34 461.75 L843.54 457.66 Z" fill="#1a1a1a" stroke="#1a1a1a" stroke-width="0.5"/>
<text x="830" y="441" class="l" textLength="35.6" lengthAdjust="spacing">«refine»</text>
<path d="M995.6 408.6 L950.8 464.2" stroke="#3c3c3c" stroke-width="0.95" fill="none" stroke-dasharray="5 4.5"/><path d="M950.80 464.20 L952.54 457.63 L952.81 461.71 L956.85 461.10 Z" fill="#1a1a1a" stroke="#1a1a1a" stroke-width="0.5"/>
<text x="975.2" y="441" class="l" textLength="35" lengthAdjust="spacing">«verify»</text>
<path d="M385.4 545 L385.4 643.4" stroke="#3c3c3c" stroke-width="0.95" fill="none" stroke-dasharray="5 4.5"/><path d="M385.40 643.40 L382.63 637.19 L385.40 640.20 L388.17 637.19 Z" fill="#1a1a1a" stroke="#1a1a1a" stroke-width="0.5"/>
<text x="386.6" y="620.8" class="l" textLength="35" lengthAdjust="spacing">«verify»</text>
<text x="293.4" y="620.8" class="l" textLength="35.6" lengthAdjust="spacing">«refine»</text>
<path d="M300 627.5 L318.8 643.3" stroke="#3c3c3c" stroke-width="0.95" fill="none" stroke-dasharray="5 4.5"/><path d="M318.80 643.30 L312.26 641.43 L316.35 641.24 L315.83 637.18 Z" fill="#1a1a1a" stroke="#1a1a1a" stroke-width="0.5"/>
<path d="M518.3 593.9 L455.7 643.9" stroke="#5a5a5a" stroke-width="1.15"/>
<rect x="516.5" y="469.6" width="162.2" height="116.7" rx="1.4" fill="#c3dcc3" stroke="#6c7c6c" stroke-width="0.8"/><path d="M516.5 492.7 H678.7" stroke="#6c7c6c" stroke-width="0.8"/>
<text x="567.8" y="477" class="s" textLength="59.2" lengthAdjust="spacing">«requirement»</text>
<text x="521.5" y="489.1" class="h" textLength="152.2" lengthAdjust="spacing">Real-Time Traffic Monitoring</text>
<text x="520.7" y="504" class="b" textLength="46" lengthAdjust="spacing">Id = &#160;"1.2"</text>
<text x="520.7" y="515" class="b" textLength="115.7" lengthAdjust="spacing">Text= "The system shall</text>
<text x="520.7" y="526" class="b" textLength="130.6" lengthAdjust="spacing">continuously monitor traffic</text>
<text x="520.7" y="537" class="b" textLength="127" lengthAdjust="spacing">conditions using a network</text>
<text x="520.7" y="548" class="b" textLength="118.2" lengthAdjust="spacing">of sensors, cameras, and</text>
<text x="520.7" y="559" class="b" textLength="103" lengthAdjust="spacing">connected vehicles to</text>
<text x="520.7" y="570" class="b" textLength="121.6" lengthAdjust="spacing">provide real-time data for</text>
<text x="520.7" y="581" class="b" textLength="84.7" lengthAdjust="spacing">adaptive control."</text>
<circle cx="522.2" cy="589.9" r="5.4" fill="#fff" stroke="#333" stroke-width="0.8"/><path d="M518.4 586.1 L526 593.7 M526 586.1 L518.4 593.7" stroke="#333" stroke-width="0.8"/>
<rect x="806.9" y="464.5" width="185.7" height="126.7" rx="1.4" fill="#c3dcc3" stroke="#6c7c6c" stroke-width="0.8"/><path d="M806.9 488.1 H992.6" stroke="#6c7c6c" stroke-width="0.8"/>
<text x="870.2" y="472.2" class="s" textLength="59.8" lengthAdjust="spacing">«requirement»</text>
<text x="811.5" y="483.6" class="h" textLength="176.5" lengthAdjust="spacing">Incident Detection and Response</text>
<text x="810.9" y="498.8" class="b" textLength="46.5" lengthAdjust="spacing">Id = &#160;"1.4"</text>
<text x="810.9" y="509.8" class="b" textLength="116" lengthAdjust="spacing">Text= "The system shall</text>
<text x="810.9" y="520.8" class="b" textLength="134.5" lengthAdjust="spacing">detect traffic incidents (e.g.,</text>
<text x="810.9" y="531.8" class="b" textLength="128" lengthAdjust="spacing">accidents, stalled vehicles)</text>
<text x="810.9" y="542.8" class="b" textLength="92" lengthAdjust="spacing">within 5 seconds of</text>
<text x="810.9" y="553.8" class="b" textLength="109.3" lengthAdjust="spacing">occurrence and initiate</text>
<text x="810.9" y="564.8" class="b" textLength="130.8" lengthAdjust="spacing">appropriate control actions,</text>
<text x="810.9" y="575.8" class="b" textLength="126.3" lengthAdjust="spacing">such as rerouting or signal</text>
<text x="810.9" y="586.8" class="b" textLength="46.5" lengthAdjust="spacing">override."</text>
<rect x="905.4" y="374.2" width="207.4" height="34.3" rx="1.4" fill="#c3dcc3" stroke="#6c7c6c" stroke-width="0.8"/><path d="M905.4 397.6 H1112.8" stroke="#6c7c6c" stroke-width="0.8"/>
<text x="987" y="381.9" class="s" textLength="44.7" lengthAdjust="spacing">«testCase»</text>
<text x="910.7" y="393.5" class="h" textLength="197" lengthAdjust="spacing">Validate Incident Detection Accuracy</text>
<rect x="278.2" y="511.1" width="214.5" height="33.7" rx="1.4" fill="#c3dcc3" stroke="#6c7c6c" stroke-width="0.8"/><path d="M278.2 534.5 H492.7" stroke="#6c7c6c" stroke-width="0.8"/>
<text x="363" y="518.8" class="s" textLength="44.7" lengthAdjust="spacing">«testCase»</text>
<text x="283.6" y="529.9" class="h" textLength="204.4" lengthAdjust="spacing">Verify Signal Adjustment Performance</text>
<rect x="315.7" y="643.8" width="140.0" height="116.2" rx="1.4" fill="#c3dcc3" stroke="#6c7c6c" stroke-width="0.8"/><path d="M315.7 666.8 H455.7" stroke="#6c7c6c" stroke-width="0.8"/>
<text x="355.4" y="651.3" class="s" textLength="60" lengthAdjust="spacing">«requirement»</text>
<text x="325" y="662.6" class="h" textLength="121.5" lengthAdjust="spacing">Dynamic Signal Timing</text>
<text x="319.9" y="677.6" class="b" textLength="46.5" lengthAdjust="spacing">Id = &#160;"1.3"</text>
<text x="319.9" y="688.6" class="b" textLength="126.6" lengthAdjust="spacing">Text= "Traffic signals shall</text>
<text x="319.9" y="699.6" class="b" textLength="130.2" lengthAdjust="spacing">adjust their phase timing in</text>
<text x="319.9" y="710.6" class="b" textLength="126.6" lengthAdjust="spacing">real-time based on current</text>
<text x="319.9" y="721.6" class="b" textLength="110" lengthAdjust="spacing">traffic density and flow</text></svg>
<div class="zb" style="top:16px;background:rgba(255,255,255,0.95)"><svg width="34" height="28" viewBox="0 0 34 28" fill="none" stroke="#5b6472" stroke-width="1.05" stroke-linecap="round" stroke-linejoin="round"><circle cx="16" cy="13.2" r="4.6"/><path d="M19.4 16.6 L22.4 19.6 M13.8 13.2 H18.2 M16 11 V15.4"/></svg></div><div class="zb" style="top:52px;background:rgba(255,255,255,0.62)"><svg width="34" height="28" viewBox="0 0 34 28" fill="none" stroke="#5b6472" stroke-width="1.05" stroke-linecap="round" stroke-linejoin="round"><circle cx="16" cy="13.2" r="4.6"/><path d="M19.4 16.6 L22.4 19.6 M13.8 13.2 H18.2"/></svg></div><div class="zb" style="top:88px;background:rgba(255,255,255,0.95)"><svg width="34" height="28" viewBox="0 0 34 28" fill="none" stroke="#5b6472" stroke-width="1.05" stroke-linecap="round" stroke-linejoin="round"><path d="M12.2 11.4 A5.3 5.3 0 1 1 11.8 15.4 M11.6 8.6 V11.8 H14.8"/></svg></div><div class="zb" style="top:124px;background:rgba(255,255,255,0.95)"><svg width="34" height="28" viewBox="0 0 34 28" fill="none" stroke="#5b6472" stroke-width="1.05" stroke-linecap="round" stroke-linejoin="round"><path d="M14.6 12.2 L11.2 8.8 M11.2 11.6 V8.8 H14 M19.4 12.2 L22.8 8.8 M20 8.8 H22.8 V11.6 M14.6 16 L11.2 19.4 M11.2 16.6 V19.4 H14 M19.4 16 L22.8 19.4 M20 19.4 H22.8 V16.6"/></svg></div><div class="zb" style="top:160px;background:rgba(255,255,255,0.95)"><svg width="34" height="28" viewBox="0 0 34 28" fill="none" stroke="#5b6472" stroke-width="1.05" stroke-linecap="round" stroke-linejoin="round"><path d="M11.4 11.4 V10 Q11.4 8.6 12.8 8.6 H14.2 M19.8 8.6 H21.2 Q22.6 8.6 22.6 10 V11.4 M22.6 16.8 V18.2 Q22.6 19.6 21.2 19.6 H19.8 M14.2 19.6 H12.8 Q11.4 19.6 11.4 18.2 V16.8"/></svg></div>
</div>
<div class="abs" style="left:1184px;top:180px;width:16px;height:530px;background:#fafafb"></div>
<svg class="abs" style="left:1184px;top:180px" width="16" height="530">
<path d="M3.8 10.4 L8.4 4.4 L13 10.4 Z" fill="#8b8b8b" stroke="#8b8b8b" stroke-width="0.8" stroke-linejoin="round"/>
<rect x="3.8" y="17" width="9" height="54" rx="4.5" fill="#8b8b8b"/>
<path d="M3.8 518.8 L8.4 524.4 L13 518.8 Z" fill="#8b8b8b" stroke="#8b8b8b" stroke-width="0.7" stroke-linejoin="round"/>
</svg>
<div class="abs" id="inputbar"></div>
<div class="abs" id="inputbox"></div>
<div class="tx" style="left:267.6px;top:739.76px;font-size:12.8px;color:#7b8088;transform:scaleX(0.9609);">Type your message... (Enter to send, Shift+Enter for new line)</div>
<svg class="abs" style="left:1140px;top:743px" width="44" height="44" viewBox="1140 743 44 44"><circle cx="1160" cy="763.7" r="18" fill="#a3bffa"/><g transform="translate(1151.6,756) scale(0.667)" fill="none" stroke="#fff" stroke-width="1.5" stroke-linecap="round" stroke-linejoin="round"><path d="m22 2-7 20-4-9-9-4Z"/><path d="M22 2 11 13"/></g></svg><div id="hshadow"></div><div id="apphead"></div>
<svg class="abs" style="left:0;top:87px" width="60" height="44" viewBox="0 87 60 44"><circle cx="25.1" cy="107.6" r="12.6" fill="#fff" stroke="#4f819d" stroke-width="1.1"/><circle cx="25.1" cy="107.6" r="11.3" fill="#8ed0f6"/><path d="M25.1 96 C18.6 101 18.6 114.2 25.1 119.2 M25.1 96 C30.6 101 30.6 114.2 25.1 119.2 M25.1 96 V119.2 M13.6 107.6 H36.6 M15.4 101.6 H34.8 M15.4 113.8 H34.8" stroke="#f1f9fe" stroke-width="1.25" fill="none"/><path d="M21.9 112.6 L29.9 120.5 L37.9 112.6 L37.9 113.6 L29.9 121.5 L21.9 113.6 Z" fill="#c9242e"/><path d="M21.9 110.6 L29.9 118.5 L37.9 110.6 L37.9 111.9 L29.9 119.8 L21.9 111.9 Z" fill="#fff"/><path d="M29.9 101.6 L37.9 109.5 L29.9 117.4 L21.9 109.5 Z" fill="#c9242e"/><path d="M30.2 104.8 L33.4 108 L30.6 111 L27.2 107.8 Z" fill="#fff"/><path d="M32.6 108.4 L34.2 110 L32.4 111.8 L30.8 110.2 Z" fill="#c9242e"/></svg>
<div class="tx" style="left:47.6px;top:95.81px;font-size:14.4px;color:#1f2430;font-weight:bold;transform:scaleX(0.9566);">Chatbot</div>
<div class="tx" style="left:47.7px;top:112.73px;font-size:10.6px;color:#6b7280;">Visual Paradigm AI Assistant for creating diagrams and analyses</div>
<svg class="abs" style="left:990px;top:87px" width="210" height="44" viewBox="990 87 210 44">
<g fill="none" stroke="#18181b" stroke-width="2" stroke-linecap="round" stroke-linejoin="round">
<g transform="translate(1001.2,100.25) scale(0.667)"><circle cx="12" cy="12" r="10"/><path d="M12 2a14.5 14.5 0 0 0 0 20 14.5 14.5 0 0 0 0-20M2 12h20"/></g>
<g transform="translate(1037.7,100.8) scale(0.625)"><path d="M12 3a6 6 0 0 0 9 9 9 9 0 1 1-9-9Z"/></g>
</g>
<defs><linearGradient id="ma" x1="0" y1="0" x2="1" y2="1"><stop offset="0" stop-color="#3dba7a"/><stop offset="1" stop-color="#2a9082"/></linearGradient></defs>
<rect x="1069" y="94" width="84" height="29" rx="6" fill="url(#ma)"/>
<circle cx="1174.5" cy="108.4" r="14" fill="#fff" stroke="#343e50" stroke-width="1" stroke-dasharray="66 9 0 0" stroke-dashoffset="-36"/>
<rect x="1163.6" y="104.8" width="3" height="5.6" rx="1.2" fill="#9aa7b6"/><rect x="1182.6" y="104.8" width="3" height="5.6" rx="1.2" fill="#9aa7b6"/>
<path d="M1165.4 107 Q1165.4 101.4 1171 101.4 H1178.4 Q1184 101.4 1184 107 V110 Q1184 115.6 1178.4 115.6 H1170.4 L1166.2 118 L1167.4 114.4 Q1165.4 113 1165.4 110 Z" fill="#5aaae8"/>
<circle cx="1171.6" cy="107.7" r="2.4" fill="#fff"/><circle cx="1177.8" cy="107.7" r="2.4" fill="#fff"/>
<circle cx="1171.7" cy="107.9" r="1.05" fill="#39465e"/><circle cx="1177.7" cy="107.9" r="1.05" fill="#39465e"/>
<path d="M1173.4 112.4 H1176" stroke="#2b5f93" stroke-width="1" stroke-linecap="round"/>
</svg>
<div class="tx" style="left:1078.6px;top:102.94px;font-size:13.3px;color:#fff;font-weight:bold;transform:scaleX(0.9235);">More Apps</div>
<div id="topline"></div>
</div>
</body></html>
